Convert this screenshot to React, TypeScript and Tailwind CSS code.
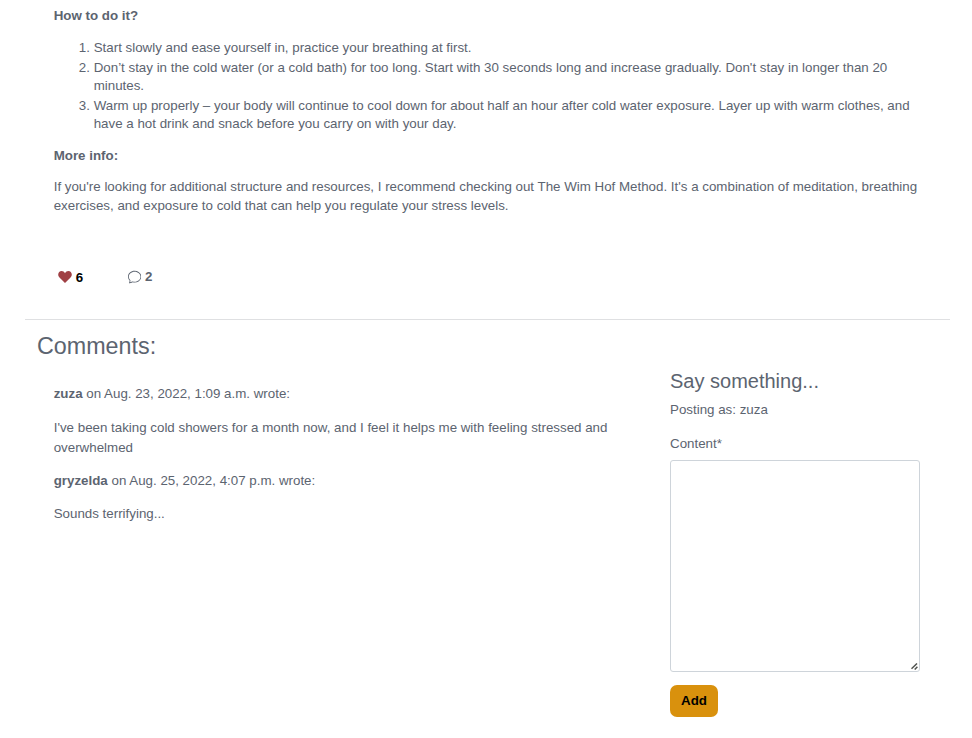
import { BsChat } from "react-icons/bs";

const steps = [
  ["Start slowly and ease yourself in, practice your breathing at first."],
  [
    "Don’t stay in the cold water (or a cold bath) for too long. Start with 30 seconds long and increase gradually. Don't stay in longer than 20",
    "minutes.",
  ],
  [
    "Warm up properly – your body will continue to cool down for about half an hour after cold water exposure. Layer up with warm clothes, and",
    "have a hot drink and snack before you carry on with your day.",
  ],
];

function Heart() {
  return (
    <svg className="mr-[3.7px] h-[12px] w-[14px]" viewBox="0 0 14 12" fill="#a04044">
      <path d="M7 2.2C7.8.7 9 0 10.3 0 12.4 0 13.8 1.6 13.8 3.6c0 1.3-.6 2.3-1.5 3.2L7 12 1.7 6.8C.8 5.9.2 4.9.2 3.6.2 1.6 1.6 0 3.7 0 5 0 6.2.7 7 2.2Z" />
    </svg>
  );
}

function Article() {
  return (
    <article className="pl-[53.7px] pt-[6px]">
      <p className="h-[33px] font-bold">How to do it?</p>
      <ol className="list-decimal pl-[40px] leading-[18px]">
        {steps.map((lines, i) => (
          <li key={i} className="mb-[2px] whitespace-nowrap">
            {lines.map((line, j) => (
              <span key={j} className={j ? "block" : ""}>{line}</span>
            ))}
          </li>
        ))}
      </ol>
      <p className="mt-[13px] font-bold">More info:</p>
      <p className="mt-[11px] whitespace-nowrap leading-[19px]">
        If you're looking for additional structure and resources, I recommend checking out The Wim Hof Method. It's a combination of meditation, breathing
        <br />
        exercises, and exposure to cold that can help you regulate your stress levels.
      </p>
      <div className="mt-[51px] flex h-[22px] items-center font-bold">
        <span className="flex w-[70px] items-center pl-[4.3px] text-black">
          <Heart />
          <span className="pt-[2px]">6</span>
        </span>
        <span className="flex items-center pl-[4px]">
          <BsChat className="mr-[4px] h-[13.33px] w-[13.33px]" />
          2
        </span>
      </div>
    </article>
  );
}

function Comments() {
  return (
    <section className="w-[633px] whitespace-nowrap pl-[16.7px] pt-[20px]">
      <p><b>zuza</b> on Aug. 23, 2022, 1:09 a.m. wrote:</p>
      <p className="mt-[14px]">
        I've been taking cold showers for a month now, and I feel it helps me with feeling stressed and
        <br />
        overwhelmed
      </p>
      <p className="mt-[13px]"><b>gryzelda</b> on Aug. 25, 2022, 4:07 p.m. wrote:</p>
      <p className="mt-[13px]">Sounds terrifying...</p>
    </section>
  );
}

function CommentForm() {
  return (
    <form className="w-[250px] pt-[5px]">
      <h3 className="text-[20px] leading-[24px]">Say something...</h3>
      <p className="mt-[7px]">Posting as: zuza</p>
      <label htmlFor="content" className="mt-[14px] block">Content*</label>
      <div className="relative mt-[6px]">
        <textarea id="content" className="block h-[212px] w-[250px] resize-none rounded-[3px] border border-[#ced4da] bg-white outline-none" />
        <svg className="absolute bottom-[2px] right-[2px] h-[7px] w-[7px]" viewBox="0 0 7 7" fill="none" stroke="#50534f" strokeWidth="1.5">
          <path d="M.5 5.7 6 .5M3.7 6.5 6.4 3.8" />
        </svg>
      </div>
      <button type="button" className="mt-[13px] block h-[32px] w-[48px] rounded-[7px] bg-[#d9910d] font-bold text-black">Add</button>
    </form>
  );
}

export default function App() {
  return (
    <main className="h-[738px] w-[972px] overflow-hidden bg-white font-['Liberation_Sans',sans-serif] text-[13.33px] leading-[20px] text-[#5c6470]">
      <Article />
      <hr className="ml-[25px] mt-[31px] w-[925px] border-t border-[#dfe0e2]" />
      <div className="pl-[37px]">
        <h2 className="mt-[12px] text-[23.3px] leading-[28px]">Comments:</h2>
        <div className="mt-[4px] flex">
          <Comments />
          <CommentForm />
        </div>
      </div>
    </main>
  );
}
